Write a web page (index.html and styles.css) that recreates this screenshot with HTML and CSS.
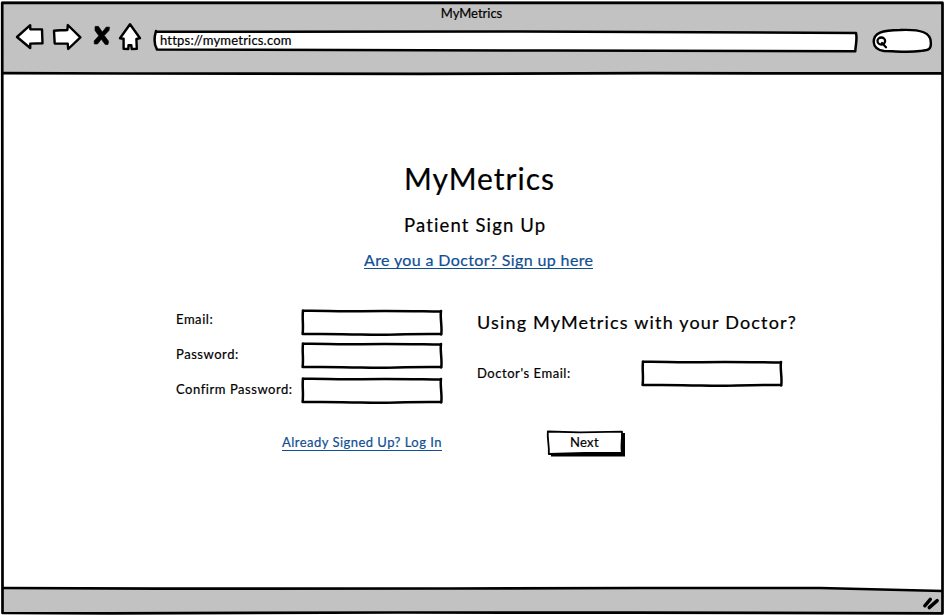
FILE: index.html
```html
<!DOCTYPE html>
<html lang="en">
<head>
<meta charset="utf-8">
<title>MyMetrics</title>
<link rel="stylesheet" href="styles.css">
</head>
<body>
<svg width="0" height="0" class="defs" aria-hidden="true">
  <symbol id="field" viewBox="0 0 142 27">
    <path class="fill" d="M2 2 L140 3 L140 25 L1 24 Z"/>
    <path class="ink" d="M1.8 1.8 C25 1.3 30 2.8 60 2.2 S110 2.2 140 2.6 M140 2 C138.8 9 141.5 18 140.2 25.5 M140.5 25 C105 24.4 85 26.4 60 25.6 S25 25 1.5 24.7 M2 1.5 C1 9 2.7 16 1.6 25"/>
  </symbol>
</svg>
<div class="window">
  <header class="toolbar">
    <div class="window-title"><span>MyMetrics</span></div>
    <nav class="nav">
      <svg class="nav-icons" width="130" height="32" viewBox="14 22 130 32">
        <path class="shape" d="M17 37 L30.2 25.2 L30.3 29.2 L42 29.4 L42.5 43.3 L30.3 43.6 L30.2 48 Z"/>
        <path class="shape" d="M80.4 37.3 L67.8 25 L67.4 30 C62 30.5 58 30 54 30.7 L54.7 43.5 L67.7 43.6 L68.2 49 Z"/>
        <path class="cross" d="M95 26.5 L98.3 26.3 L102.3 32 L106.3 27 L109.6 27.2 L109 30.5 L104.3 35.5 L108.6 41.3 L108 44.5 L105.2 44.5 L101.3 39.3 L97.5 44 L94.3 44 L94.2 40.8 L98.8 35.8 L95 30.5 Z"/>
        <path class="shape" d="M130 24.2 L120 38.3 L123.6 38.8 L123.6 48.8 L128.3 49 L128.5 45.2 L131.3 45.1 L131.8 49 L136.8 48.7 L136.4 39 L140 38.2 Z"/>
      </svg>
      <div class="address">
        <svg width="705" height="24" viewBox="153 29 705 24">
          <path class="fill" d="M156 31 L856 33 L855 51 L156 49 Z"/>
          <path class="ink" d="M156 31.7 L520 31.5 L856 33 C857.5 39 855.5 45 855.3 51.3 L550 50.6 L157 49.5 C153.8 44 154.2 37 156 31 Z"/>
        </svg>
        <span class="url">https://mymetrics.com</span>
      </div>
      <svg class="search" width="62" height="28" viewBox="871 27 62 28">
        <path class="shape" d="M873.7 42 C873.5 33 882 30 900 30 C922 29 930.5 33 930.8 42 C931.5 50 928 50 920 51 C907 53 896 51 884 51 C877 50 874 47 873.7 42 Z"/>
        <ellipse class="lens" cx="881.3" cy="41" rx="3.8" ry="3.5"/>
        <path class="lens" d="M882 43 L886 47.2"/>
      </svg>
    </nav>
  </header>
  <main class="page">
    <h1 class="brand"><span>MyMetrics</span></h1>
    <h2 class="subtitle"><span>Patient Sign Up</span></h2>
    <a class="link doctor-link"><span>Are you a Doctor? Sign up here</span></a>
    <div class="columns">
      <form class="account">
        <div class="row"><label>Email:</label><svg class="field"><use href="#field"/></svg></div>
        <div class="row"><label>Password:</label><svg class="field raised"><use href="#field"/></svg></div>
        <div class="row"><label>Confirm Password:</label><svg class="field raised"><use href="#field"/></svg></div>
        <a class="link login">Already Signed Up? Log In</a>
      </form>
      <section class="doctor">
        <h3>Using MyMetrics with your Doctor?</h3>
        <div class="row"><label>Doctor's Email:</label><svg class="field"><use href="#field"/></svg></div>
        <div class="next">
          <svg width="80" height="28" viewBox="546 429 80 28">
            <path d="M551 433 L625 433 L625 456.5 L551 456.5 Z"/>
            <path class="fill" d="M548 432 L621.5 432 L621 453 L548 454 Z"/>
            <path class="button-line" d="M547.8 431.5 L580 432.3 L622 431.6 C622.5 438 620.5 446 622 453 L585 453 L548.8 454 C549.5 446 547.2 440 547.8 431.5 Z"/>
          </svg>
          <span>Next</span>
        </div>
      </section>
    </div>
  </main>
  <svg class="frame" width="945" height="615" viewBox="0 0 945 615" aria-hidden="true">
    <path class="footer-fill" d="M3 587.5 L820 587 L943 590 L943 612 L3 612 Z"/>
    <path class="frame-line" d="M2.2 1.8 L942.5 1.8 C942 180 943.3 420 942.5 612.3 C720 612.5 600 611 400 611.5 S130 613 2.5 612 C3.3 430 1.5 180 2.2 1.8 Z"/>
    <path class="frame-line" d="M3 72.2 L130 72.5 L420 72.8 L650 72.2 L943 72.4 M3 587 L160 587.6 L450 587.5 L640 587 L820 587 L943 590"/>
    <path class="grip" d="M924.8 604.8 L930.3 598.4 M929.2 606.6 L937.2 599.6"/>
  </svg>
</div>
</body>
</html>
```
FILE: styles.css
```css
* { box-sizing: border-box; }
body { margin: 0; background: #fff; color: #000; font: 13px/18px Lato, "Open Sans", sans-serif; overflow: hidden; white-space: nowrap; -webkit-text-stroke: 0.2px currentColor; }
svg { display: block; flex: none; }
h1, h2, h3 { margin: 0; font-weight: 400; }
.defs { position: absolute; }
.window { position: relative; width: 945px; height: 615px; }
.toolbar { height: 72px; margin: 1px 2px 0; background: #c2c2c2; }
.window-title { height: 21px; padding: 3px 2px 0 0; text-align: center; letter-spacing: 0; }
.nav { display: flex; align-items: flex-start; padding-left: 12px; }
.address { display: grid; margin: 7px 13px 0 9px; }
.address > * { grid-area: 1 / 1; }
.url { padding: 2px 0 0 7px; letter-spacing: 0.2px; }
.search { margin-top: 5px; }
.fill { fill: #fff; }
.ink { fill: none; stroke: #000; stroke-width: 2.5; stroke-linecap: round; stroke-linejoin: round; }
.shape { fill: #fff; stroke: #000; stroke-width: 2.4; stroke-linejoin: round; }
.cross { fill: #000; stroke: #000; stroke-width: 0.6; stroke-linejoin: round; }
.lens { fill: none; stroke: #000; stroke-width: 2.3; stroke-linecap: round; }
.page { height: 514px; padding-top: 85px; display: flex; flex-direction: column; }
.brand { margin-left: 404px; height: 53px; font-size: 30px; line-height: 40px; letter-spacing: 1px; }
.subtitle { margin-left: 404px; height: 30px; font-size: 18.5px; line-height: 28px; letter-spacing: 1.15px; }
.link { color: #0f4f94; }
.doctor-link { align-self: flex-start; margin: 10px 0 0 364px; font-size: 16px; line-height: 18px; height: 18px; border-bottom: 1px solid; letter-spacing: 0.37px; }
.columns { display: flex; gap: 34px; margin: 39px 0 0 176px; }
.account { width: 267px; display: flex; flex-direction: column; }
.row { display: flex; justify-content: space-between; align-items: flex-start; height: 35px; letter-spacing: 0.55px; }
.row label { padding-top: 2px; }
.field { width: 142px; height: 27px; margin-top: 0.5px; }
.field.raised { margin-top: -1.5px; }
.login { align-self: flex-end; margin: 21px 1px 0 0; line-height: 17px; height: 17px; border-bottom: 1px solid; letter-spacing: 0.48px; }
.doctor { width: 306px; }
.doctor h3 { height: 52px; font-size: 18px; line-height: 28px; letter-spacing: 1.18px; }
.doctor .row label { padding-top: 4px; }
.doctor .field { margin-top: 0; }
.next { display: grid; width: 80px; margin: 34px 0 0 69px; }
.next > * { grid-area: 1 / 1; }
.next span { padding: 4px 0 0 24px; letter-spacing: 0.3px; }
.button-line { fill: none; stroke: #000; stroke-width: 1.8; stroke-linejoin: round; }
.frame { position: absolute; inset: 0; pointer-events: none; }
.footer-fill { fill: #c2c2c2; }
.frame-line { fill: none; stroke: #000; stroke-width: 2.7; stroke-linejoin: round; }
.grip { stroke: #000; stroke-width: 3.4; stroke-linecap: round; }
```
